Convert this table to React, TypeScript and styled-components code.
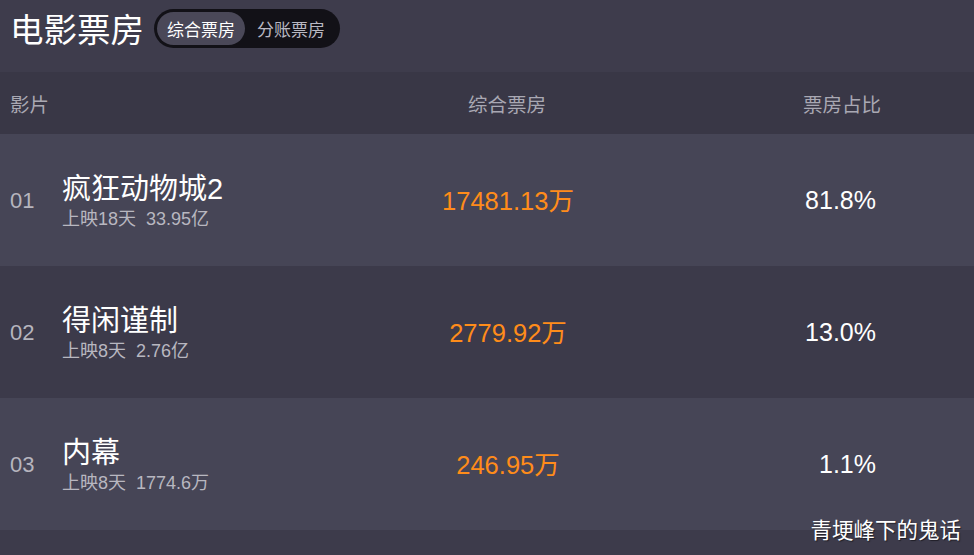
import React from "react";
import styled, { createGlobalStyle } from "styled-components";

const Global = createGlobalStyle`
  html, body { margin: 0; padding: 0; background: #3d3b4b; }
  body { font-family: "Liberation Sans", "Noto Sans CJK SC", sans-serif; }
  * { box-sizing: border-box; }
`;

const Page = styled.div`
  position: relative;
  width: 974px;
  height: 555px;
  overflow: hidden;
  background: #3d3b4b;
`;

const TopBar = styled.div`
  height: 72px;
  display: flex;
  align-items: center;
  padding: 0 0 0 10px;
  gap: 10px;
  background: #3e3c4c;
`;

const Title = styled.h1`
  margin: 0;
  font-family: "Noto Sans CJK SC", sans-serif;
  font-weight: 400;
  font-size: 33.5px;
  line-height: 40px;
  color: #ffffff;
  margin-top: -17px;
`;

const Toggle = styled.div`
  display: flex;
  align-items: center;
  height: 39px;
  padding: 3px;
  border-radius: 20px;
  background: #121117;
  margin-top: -15px;
`;

const ToggleItem = styled.div<{ $active?: boolean }>`
  height: 33px;
  display: flex;
  align-items: center;
  padding: 0 ${(p) => (p.$active ? "10px" : "12px")};
  border-radius: 17px;
  font-family: "Noto Sans CJK SC", sans-serif;
  font-size: 17px;
  color: ${(p) => (p.$active ? "#ffffff" : "#b9b8c2")};
  background: ${(p) => (p.$active ? "#4a4858" : "transparent")};
`;

const Grid = styled.div`
  display: grid;
  grid-template-columns: 370px 274px 1fr;
  align-items: center;
`;

const HeadRow = styled(Grid)`
  height: 62px;
  background: #393746;
  font-family: "Noto Sans CJK SC", sans-serif;
  font-size: 19.5px;
  color: #a9a8b3;
`;

const HeadCell = styled.div<{ $align: "left" | "center" | "right"; $pr?: number }>`
  text-align: ${(p) => p.$align};
  padding-left: ${(p) => (p.$align === "left" ? "10px" : "0")};
  padding-right: ${(p) => (p.$pr ? `${p.$pr}px` : "0")};
`;

const Row = styled(Grid)<{ $alt?: boolean }>`
  height: 132px;
  background: ${(p) => (p.$alt ? "#3c3a4a" : "#464556")};
`;

const FilmCell = styled.div`
  display: flex;
  align-items: center;
  padding-left: 10px;
`;

const Rank = styled.div`
  width: 52px;
  font-size: 22px;
  color: #b6b5be;
  padding-top: 2px;
`;

const FilmInfo = styled.div`
  display: flex;
  flex-direction: column;
  gap: 3px;
  padding-top: 1px;
`;

const FilmName = styled.div`
  font-size: 29px;
  line-height: 34px;
  color: #ffffff;
`;

const FilmMeta = styled.div`
  display: flex;
  gap: 10px;
  font-size: 18px;
  line-height: 21px;
  color: #b8b7c0;
`;

const BoxValue = styled.div`
  text-align: center;
  font-size: 25.5px;
  color: #ff8c1a;
  padding-left: 2px;
  margin-top: -4px;
`;

const Share = styled.div`
  text-align: right;
  padding-right: 98px;
  font-size: 25px;
  color: #ffffff;
`;

const Watermark = styled.div`
  position: absolute;
  right: 13px;
  bottom: 13px;
  font-family: "Noto Sans CJK SC", sans-serif;
  font-size: 21.5px;
  line-height: 26px;
  color: #ffffff;
  text-shadow: 1px 1px 1px rgba(0, 0, 0, 0.5);
`;

const films = [
  { rank: "01", name: "疯狂动物城2", days: "上映18天", total: "33.95亿", box: "17481.13万", share: "81.8%" },
  { rank: "02", name: "得闲谨制", days: "上映8天", total: "2.76亿", box: "2779.92万", share: "13.0%" },
  { rank: "03", name: "内幕", days: "上映8天", total: "1774.6万", box: "246.95万", share: "1.1%" },
];

export default function App() {
  return (
    <Page>
      <Global />
      <TopBar>
        <Title>电影票房</Title>
        <Toggle>
          <ToggleItem $active>综合票房</ToggleItem>
          <ToggleItem>分账票房</ToggleItem>
        </Toggle>
      </TopBar>
      <HeadRow>
        <HeadCell $align="left">影片</HeadCell>
        <HeadCell $align="center">综合票房</HeadCell>
        <HeadCell $align="right" $pr={93}>票房占比</HeadCell>
      </HeadRow>
      {films.map((f, i) => (
        <Row key={f.rank} $alt={i % 2 === 1}>
          <FilmCell>
            <Rank>{f.rank}</Rank>
            <FilmInfo>
              <FilmName>{f.name}</FilmName>
              <FilmMeta>
                <span>{f.days}</span>
                <span>{f.total}</span>
              </FilmMeta>
            </FilmInfo>
          </FilmCell>
          <BoxValue>{f.box}</BoxValue>
          <Share>{f.share}</Share>
        </Row>
      ))}
      <Watermark>青埂峰下的鬼话</Watermark>
    </Page>
  );
}
